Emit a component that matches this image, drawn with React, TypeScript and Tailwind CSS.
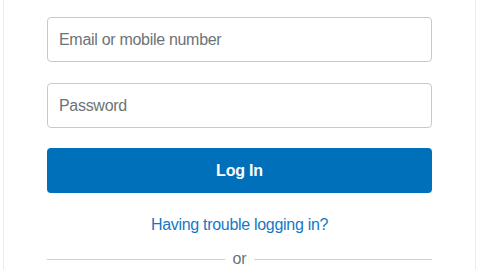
import React from "react";

export default function App() {
  return (
    <div className="w-[480px] h-[270px] overflow-hidden bg-white font-['Liberation_Sans',Arial,sans-serif]">
      <div className="ml-[3px] w-[473px] h-[270px] border-x border-[#ececec] bg-white">
        <div className="ml-[43px] w-[385px] pt-[17px] flex flex-col">
          <input
            type="text"
            placeholder="Email or mobile number"
            className="h-[45px] w-full rounded-[4px] border border-[#c6cacc] px-[11px] text-[16px] tracking-[-0.3px] text-[#2c2e2f] placeholder:text-[#6c7378] outline-none"
          />
          <input
            type="password"
            placeholder="Password"
            className="mt-[21px] h-[45px] w-full rounded-[4px] border border-[#c6cacc] px-[11px] text-[16px] tracking-[-0.3px] text-[#2c2e2f] placeholder:text-[#6c7378] outline-none"
          />
          <button className="mt-[20px] h-[45px] w-full rounded-[4px] bg-[#0070ba] text-[16px] font-bold tracking-[-0.2px] text-white">
            Log In
          </button>
          <a href="#" className="mt-[22px] text-center text-[16px] leading-[20px] tracking-[-0.3px] text-[#1479c3]">
            Having trouble logging in?
          </a>
          <div className="mt-[14px] flex items-center gap-[7px]">
            <div className="h-px flex-1 bg-[#cbd2d6]" />
            <span className="text-[16px] leading-[20px] text-[#6c7378]">or</span>
            <div className="h-px flex-1 bg-[#cbd2d6]" />
          </div>
        </div>
      </div>
    </div>
  );
}
